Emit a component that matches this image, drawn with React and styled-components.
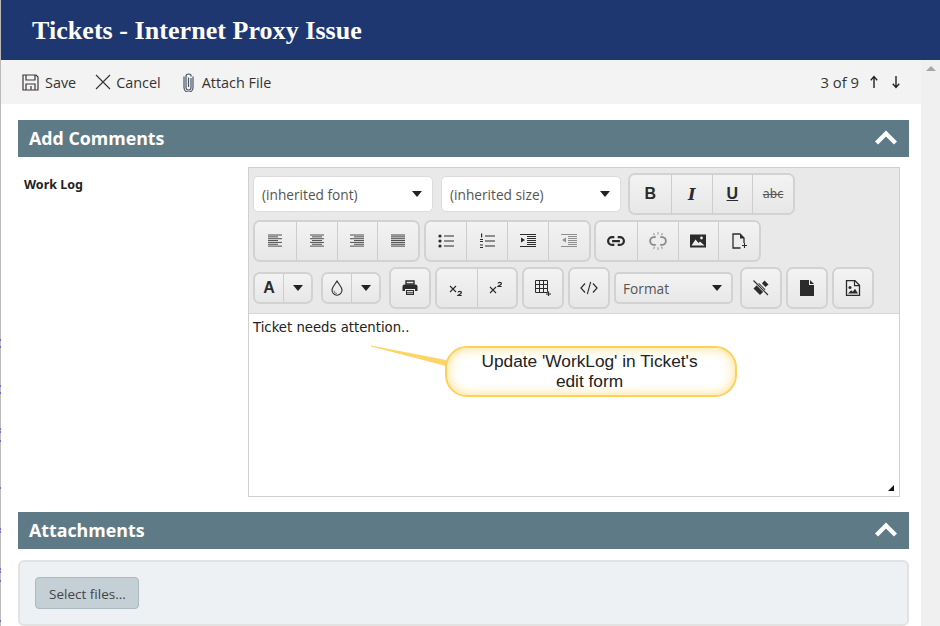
import React from "react";
import styled, { createGlobalStyle } from "styled-components";

const GlobalStyle = createGlobalStyle`
  html, body {
    margin: 0;
    padding: 0;
    background: #fff;
    overflow: hidden;
  }
`;

// bits of the page behind the window that show on the left edge
const edgeMarks = [339, 346, 385, 392, 428, 431, 440, 487, 528, 531, 568, 571, 580, 620];
const edgeStops = edgeMarks
  .map((y) => `#bbb ${y}px, #6f6fd8 ${y}px, #6f6fd8 ${y + 2}px, #bbb ${y + 2}px`)
  .join(", ");

const Page = styled.div`
  position: relative;
  width: 940px;
  height: 626px;
  overflow: hidden;
  display: flex;
  flex-direction: column;
  padding-left: 1px;
  box-sizing: border-box;
  font-family: "Open Sans", sans-serif;
`;

const EdgeStrip = styled.div`
  position: absolute;
  left: 0;
  top: 0;
  width: 1px;
  height: 626px;
  background: linear-gradient(#bbb 0, ${edgeStops}, #bbb 626px);
`;

const TitleBar = styled.header`
  flex: 0 0 60px;
  box-sizing: border-box;
  background: #1f3771;
  display: flex;
  align-items: center;
  padding: 2px 0 0 31px;
`;

const Title = styled.h1`
  margin: 0;
  color: #fff;
  font: bold 26px "Liberation Serif", serif;
  letter-spacing: 0.05px;
`;

const Body = styled.div`
  flex: 1;
  display: flex;
  min-height: 0;
`;

const Main = styled.main`
  flex: 1;
  min-width: 0;
`;

const Scrollbar = styled.div`
  flex: 0 0 19px;
  background: #f0f0f0;
  display: flex;
  justify-content: center;
  padding-top: 6px;
`;

const ScrollArrow = styled.div`
  width: 0;
  height: 0;
  border-left: 5px solid transparent;
  border-right: 5px solid transparent;
  border-bottom: 5px solid #a6a6a6;
`;

const ActionBar = styled.div`
  height: 44px;
  background: #f3f3f3;
  display: flex;
  align-items: center;
  padding: 0 18px 0 21px;
  color: #333;
  font-size: 14.4px;
`;

const Action = styled.span`
  display: flex;
  align-items: center;
  gap: ${(p) => p.$gap || 6}px;
  margin-right: ${(p) => p.$after || 20}px;
`;

const Pager = styled.div`
  margin-left: auto;
  display: flex;
  align-items: center;
  gap: 8px;
  font-size: 14.8px;
`;

const Content = styled.div`
  padding: 16px 12px 0 17px;
`;

const SectionBar = styled.div`
  height: 37px;
  box-sizing: border-box;
  background: #5f7a87;
  color: #fff;
  display: flex;
  align-items: center;
  justify-content: space-between;
  padding: 0 12px 2px 11px;
  font-size: 17.8px;
  font-weight: 700;
`;

const FormRow = styled.div`
  display: flex;
  padding: 10px 9px 15px 0;
`;

const FieldLabel = styled.label`
  flex: 0 0 230px;
  box-sizing: border-box;
  padding: 9px 0 0 6px;
  font: bold 12.5px "Noto Sans", sans-serif;
  color: #222;
`;

const Editor = styled.div`
  flex: 1;
  height: 330px;
  box-sizing: border-box;
  border: 1px solid #d0d0d0;
  display: flex;
  flex-direction: column;
`;

const EditorTools = styled.div`
  flex: 0 0 146px;
  box-sizing: border-box;
  background: #e9e9e9;
  border-bottom: 1px solid #d6d6d6;
  padding: 5px 4px 0;
  display: flex;
  flex-direction: column;
  gap: 5px;
`;

const ToolRow = styled.div`
  display: flex;
  align-items: center;
  height: 42px;
  gap: ${(p) => p.$gap || 4}px;
`;

const Dropdown = styled.div`
  width: ${(p) => p.$w}px;
  height: ${(p) => p.$h}px;
  box-sizing: border-box;
  margin-right: ${(p) => p.$after || 0}px;
  border: ${(p) => (p.$plain ? "2px solid #d2d2d2" : "1px solid #dcdcdc")};
  border-radius: 5px;
  background: ${(p) => (p.$plain ? "linear-gradient(#f3f3f3, #e8e8e8)" : "#fff")};
  display: flex;
  align-items: center;
  justify-content: space-between;
  padding: 0 ${(p) => (p.$plain ? 9 : 10)}px 0 ${(p) => (p.$plain ? 7 : 8)}px;
  font-size: 13.7px;
  color: #555;
`;

const Caret = styled.span`
  width: 0;
  height: 0;
  border-left: 5px solid transparent;
  border-right: 5px solid transparent;
  border-top: 6px solid #222;
`;

const ButtonGroup = styled.div`
  display: flex;
  height: ${(p) => p.$h || 42}px;
  box-sizing: border-box;
  margin-right: ${(p) => p.$after || 0}px;
  border: 2px solid #d2d2d2;
  border-radius: 7px;
  overflow: hidden;
`;

const ToolButton = styled.button`
  width: ${(p) => p.$w || 40.75}px;
  padding: 0;
  border: 0;
  border-left: 1px solid #cdcdcd;
  background: linear-gradient(#f3f3f3, #e7e7e7);
  display: flex;
  align-items: center;
  justify-content: center;
  color: #2b2b2b;

  &:first-child {
    border-left: 0;
  }
`;

const EditArea = styled.div`
  flex: 1;
  position: relative;
  padding: 6px 4px;
  font: 13.25px "DejaVu Sans", sans-serif;
  color: #222;
`;

const ResizeGrip = styled.span`
  position: absolute;
  right: 5px;
  bottom: 5px;
  width: 0;
  height: 0;
  border-left: 6px solid transparent;
  border-bottom: 6px solid #111;
`;

const CalloutTail = styled.svg`
  position: absolute;
  left: 122px;
  top: 31px;
`;

const Callout = styled.div`
  position: absolute;
  left: 196px;
  top: 32px;
  width: 292px;
  height: 51px;
  box-sizing: border-box;
  border: 2px solid #fdd05c;
  border-radius: 22px;
  background: #fff;
  box-shadow: inset 0 0 12px #ffdc7c;
  display: flex;
  align-items: center;
  justify-content: center;
  padding: 0 3px 2px 0;
  text-align: center;
  font: 17.3px/20px "Liberation Sans", sans-serif;
  color: #222;
`;

const DropZone = styled.div`
  margin-top: 11px;
  height: 66px;
  box-sizing: border-box;
  background: #eef1f4;
  border: 2px solid #e2e2e2;
  border-radius: 6px;
  padding: 15px;
`;

const SelectButton = styled.button`
  width: 104px;
  height: 32px;
  border: 1px solid #adb8bf;
  border-radius: 4px;
  background: #c4cfd6;
  color: #444;
  font: 13.5px/30px "Open Sans", sans-serif;
  padding: 1px 0 0 1px;
`;

const ToolLetter = styled.span`
  font: bold ${(p) => p.$size || 15}px "Liberation Sans", sans-serif;
  color: #2b2b2b;
  text-decoration: ${(p) => p.$deco || "none"};
`;

const ItalicLetter = styled.span`
  font: italic bold 16px "DejaVu Serif", serif;
  color: #2b2b2b;
`;

const StrikeLetter = styled.span`
  font: 11.5px "DejaVu Sans", sans-serif;
  color: #555;
  text-decoration: line-through;
`;

const Glyph = ({ children, size = 16, box = 16, fill = "#2b2b2b" }) => (
  <svg width={size} height={size} viewBox={`0 0 ${box} ${box}`} fill={fill}>
    {children}
  </svg>
);

// stripes for the align and list icons
const Stripes = ({ rows, opacity = 1 }) => (
  <Glyph>
    <g opacity={opacity}>
      {rows.map(([x, w], i) => (
        <rect key={i} x={x} y={1.5 + i * 1.85} width={w} height="1" />
      ))}
    </g>
  </Glyph>
);

const AlignLeft = () => <Stripes rows={[[1, 14], [1, 10], [1, 14], [1, 10], [1, 14], [1, 10], [1, 14]]} opacity={0.8} />;
const AlignCenter = () => <Stripes rows={[[1, 14], [3, 10], [1, 14], [3, 10], [1, 14], [3, 10], [1, 14]]} opacity={0.8} />;
const AlignRight = () => <Stripes rows={[[1, 14], [5, 10], [1, 14], [5, 10], [1, 14], [5, 10], [1, 14]]} opacity={0.8} />;
const AlignFull = () => <Stripes rows={[[1, 14], [1, 14], [1, 14], [1, 14], [1, 14], [1, 14], [1, 14]]} opacity={0.85} />;

const BulletList = () => (
  <Glyph>
    <circle cx="2" cy="3" r="1.6" />
    <circle cx="2" cy="8" r="1.6" />
    <circle cx="2" cy="13" r="1.6" />
    <rect x="6" y="2.5" width="10" height="1" />
    <rect x="6" y="7.5" width="10" height="1" />
    <rect x="6" y="12.5" width="10" height="1" />
  </Glyph>
);

const NumberList = () => (
  <Glyph>
    <rect x="2" y="0.5" width="1.2" height="4" />
    <rect x="1" y="6" width="3" height="1" />
    <rect x="1" y="8" width="3" height="1" />
    <rect x="1" y="11.5" width="3" height="1" />
    <rect x="1" y="14" width="3" height="1" />
    <rect x="6" y="2.5" width="10" height="1" />
    <rect x="6" y="7.5" width="10" height="1" />
    <rect x="6" y="12.5" width="10" height="1" />
  </Glyph>
);

const Indent = ({ out }) => (
  <Glyph fill={out ? "#8f8f8f" : "#2b2b2b"}>
    <rect x="0" y="1" width="16" height="1" />
    <rect x="7" y="3" width="9" height="1" />
    <rect x="7" y="5" width="9" height="1" />
    <rect x="7" y="7" width="9" height="1" />
    <rect x="7" y="9" width="9" height="1" />
    <rect x="7" y="11" width="9" height="1" />
    <rect x="0" y="13" width="16" height="1" />
    <path d={out ? "M5 4.5v5l-4-2.5z" : "M1 4.5v5l4-2.5z"} />
  </Glyph>
);

const LinkIcon = () => (
  <Glyph size={18}>
    <path
      d="M6.5 4.5h-2a3.5 3.5 0 0 0 0 7h2M9.5 4.5h2a3.5 3.5 0 0 1 0 7h-2M4.5 8h7"
      fill="none"
      stroke="#2b2b2b"
      strokeWidth="2"
    />
  </Glyph>
);

const UnlinkIcon = () => (
  <Glyph size={18}>
    <path
      d="M6 4.5H4.5a3.5 3.5 0 0 0 0 7H6M10 4.5h1.5a3.5 3.5 0 0 1 0 7H10"
      fill="none"
      stroke="#8a8a8a"
      strokeWidth="1.6"
    />
    <path d="M8 0v2.5M8 13.5V16M4 1l1 2M12 1l-1 2M4 15l1-2M12 15l-1-2" stroke="#a5a5a5" strokeWidth="1" />
  </Glyph>
);

const ImageIcon = () => (
  <Glyph>
    <path d="M0 1.5h16v13H0z" />
    <circle cx="11.5" cy="5" r="1.4" fill="#eee" />
    <path d="M1.5 12.5 5.5 6.5 8.5 10l1.5-1.5 4.5 4z" fill="#eee" />
  </Glyph>
);

const NewFileIcon = () => (
  <Glyph>
    <path d="M9.5 15H2V1h7l4 4v5" fill="none" stroke="#2b2b2b" strokeWidth="1.3" />
    <path d="M9 1v4.5h4" fill="#2b2b2b" />
    <path d="M11 12.5h5M13.5 10v5" stroke="#2b2b2b" strokeWidth="1.1" />
  </Glyph>
);

const DropIcon = () => (
  <Glyph>
    <path
      d="M8 1C6 4.5 3 7 3 10.2a5 5 0 0 0 10 0C13 7 10 4.5 8 1z"
      fill="none"
      stroke="#2b2b2b"
      strokeWidth="1.1"
    />
    <path d="M5 10.5a3 3 0 0 0 3 3" fill="none" stroke="#777" strokeWidth="1" />
  </Glyph>
);

const PrintIcon = () => (
  <Glyph>
    <path d="M4 1h8v3H4z" fill="none" stroke="#2b2b2b" strokeWidth="1.4" />
    <path d="M2.5 4.5h11A2 2 0 0 1 15.5 6.5V11H13V9H3v2H.5V6.5a2 2 0 0 1 2-2z" />
    <path d="M4 10h8v5H4z" />
    <path d="M5 11.5h6M5 13.2h6" stroke="#eee" strokeWidth="0.9" />
  </Glyph>
);

const SubScript = () => (
  <Glyph>
    <path d="M1 6l6 6M7 6l-6 6" stroke="#2b2b2b" strokeWidth="1.1" />
    <path d="M9 12.5c.3-1.6 3.6-1.6 3.4.2-.2 1-2.3 1.6-3.4 2.8h3.7" fill="none" stroke="#2b2b2b" strokeWidth="1.2" />
  </Glyph>
);

const SuperScript = () => (
  <Glyph>
    <path d="M1 7l6 6M7 7l-6 6" stroke="#2b2b2b" strokeWidth="1.1" />
    <path d="M9 3.5c.3-1.6 3.6-1.6 3.4.2-.2 1-2.3 1.6-3.4 2.8h3.7" fill="none" stroke="#2b2b2b" strokeWidth="1.2" />
  </Glyph>
);

const TableIcon = () => (
  <Glyph>
    <path d="M.5.5h12v12H.5zM.5 4.5h12M.5 8.5h12M4.5.5v12M8.5.5v12" fill="none" stroke="#2b2b2b" strokeWidth="1" />
    <path d="M11 14h5M13.5 11.5v4.5" stroke="#2b2b2b" strokeWidth="1.2" />
  </Glyph>
);

const CodeIcon = () => (
  <Glyph size={18}>
    <path d="M4.5 4 .8 8l3.7 4M11.5 4l3.7 4-3.7 4M9.5 2.5l-3 11" fill="none" stroke="#2b2b2b" strokeWidth="1" />
  </Glyph>
);

const CleanIcon = () => (
  <Glyph>
    <path d="M.5 8.5 6 3l6.5 6.5L7 15z" />
    <path d="M9 3.5 11.5.5l4 4-3 2.5z" />
    <path d="M.5 .5 15 15" stroke="#eee" strokeWidth="2.4" />
    <path d="M.5 .5 15 15" stroke="#2b2b2b" strokeWidth="1.1" />
  </Glyph>
);

const DocIcon = () => (
  <Glyph>
    <path d="M1 0h9v5h5v11H1z" />
    <path d="M11 0l4 4h-4z" />
  </Glyph>
);

const DocImageIcon = () => (
  <Glyph>
    <path d="M1.5.7h8.5l4.5 4.5v10.1h-13z" fill="none" stroke="#2b2b2b" strokeWidth="1.3" />
    <path d="M9.5.7v5h5" fill="none" stroke="#2b2b2b" strokeWidth="1.2" />
    <circle cx="5" cy="7.5" r="1.5" />
    <path d="M3 13.5l3.2-3.2 1.6 1.4 2.2-3 3 4.8z" />
  </Glyph>
);

const SaveIcon = () => (
  <svg width="17" height="17" viewBox="0 0 17 17" fill="none" stroke="#3a3a3a" strokeWidth="1.2">
    <path d="M1 1h13l2 2v13H1z" />
    <path d="M4 1v5h9V1M4 16v-6h9v6" />
    <path d="M9 12v4" stroke="#7a5c40" strokeWidth="1.6" />
  </svg>
);

const CloseIcon = () => (
  <svg width="16" height="16" viewBox="0 0 16 16" fill="none" stroke="#333" strokeWidth="1.1">
    <path d="M1 1l14 14M15 1 1 15" />
  </svg>
);

const ClipIcon = () => (
  <svg width="11" height="19" viewBox="0 0 11 19" fill="none" stroke="#4a5368" strokeWidth="1.2">
    <path d="M8 5v9.5a2.5 2.5 0 0 1-5 0V3.6a2.6 2.6 0 0 1 5.2 0" />
    <path d="M5.5 4.5v9.5M10 3.6v11a4.5 4.5 0 0 1-9 0V3.6" />
  </svg>
);

const ArrowIcon = ({ down }) => (
  <svg width="14" height="14" viewBox="0 0 14 14" fill="none" stroke="#222" strokeWidth="1.4">
    <g transform={down ? "rotate(180 7 7)" : undefined}>
      <path d="M7 13V2M3.8 5.2 7 1.6l3.2 3.6" />
    </g>
  </svg>
);

const Chevron = () => (
  <svg width="22" height="15" viewBox="0 0 22 15" fill="none" stroke="#fff" strokeWidth="4.4">
    <path d="M1.5 13 11 3.5l9.5 9.5" />
  </svg>
);

const Section = ({ title }) => (
  <SectionBar>
    {title}
    <Chevron />
  </SectionBar>
);

export default function App() {
  return (
    <>
      <GlobalStyle />
      <Page>
        <EdgeStrip />
        <TitleBar>
          <Title>Tickets - Internet Proxy Issue</Title>
        </TitleBar>
        <Body>
          <Main>
            <ActionBar>
              <Action $after={19}>
                <SaveIcon />
                Save
              </Action>
              <Action $gap={5} $after={22}>
                <CloseIcon />
                Cancel
              </Action>
              <Action $gap={8}>
                <ClipIcon />
                Attach File
              </Action>
              <Pager>
                3 of 9
                <ArrowIcon />
                <ArrowIcon down />
              </Pager>
            </ActionBar>
            <Content>
              <Section title="Add Comments" />
              <FormRow>
                <FieldLabel>Work Log</FieldLabel>
                <Editor>
                  <EditorTools>
                    <ToolRow>
                      <Dropdown $w={180} $h={36} $after={4}>
                        (inherited font)
                        <Caret />
                      </Dropdown>
                      <Dropdown $w={180} $h={36} $after={3}>
                        (inherited size)
                        <Caret />
                      </Dropdown>
                      <ButtonGroup>
                        <ToolButton><ToolLetter $size={16}>B</ToolLetter></ToolButton>
                        <ToolButton><ItalicLetter>I</ItalicLetter></ToolButton>
                        <ToolButton><ToolLetter $size={16} $deco="underline">U</ToolLetter></ToolButton>
                        <ToolButton><StrikeLetter>abc</StrikeLetter></ToolButton>
                      </ButtonGroup>
                    </ToolRow>
                    <ToolRow $gap={3.5}>
                      <ButtonGroup>
                        <ToolButton><AlignLeft /></ToolButton>
                        <ToolButton><AlignCenter /></ToolButton>
                        <ToolButton><AlignRight /></ToolButton>
                        <ToolButton><AlignFull /></ToolButton>
                      </ButtonGroup>
                      <ButtonGroup>
                        <ToolButton><BulletList /></ToolButton>
                        <ToolButton><NumberList /></ToolButton>
                        <ToolButton><Indent /></ToolButton>
                        <ToolButton><Indent out /></ToolButton>
                      </ButtonGroup>
                      <ButtonGroup>
                        <ToolButton><LinkIcon /></ToolButton>
                        <ToolButton><UnlinkIcon /></ToolButton>
                        <ToolButton><ImageIcon /></ToolButton>
                        <ToolButton><NewFileIcon /></ToolButton>
                      </ButtonGroup>
                    </ToolRow>
                    <ToolRow>
                      <ButtonGroup $h={32} $after={4}>
                        <ToolButton $w={28}><ToolLetter $size={16}>A</ToolLetter></ToolButton>
                        <ToolButton $w={28}><Caret /></ToolButton>
                      </ButtonGroup>
                      <ButtonGroup $h={32} $after={4}>
                        <ToolButton $w={28}><DropIcon /></ToolButton>
                        <ToolButton $w={28}><Caret /></ToolButton>
                      </ButtonGroup>
                      <ButtonGroup>
                        <ToolButton $w={38}><PrintIcon /></ToolButton>
                      </ButtonGroup>
                      <ButtonGroup>
                        <ToolButton $w={39.5}><SubScript /></ToolButton>
                        <ToolButton $w={39.5}><SuperScript /></ToolButton>
                      </ButtonGroup>
                      <ButtonGroup>
                        <ToolButton $w={38}><TableIcon /></ToolButton>
                      </ButtonGroup>
                      <ButtonGroup>
                        <ToolButton $w={38}><CodeIcon /></ToolButton>
                      </ButtonGroup>
                      <Dropdown $w={119} $h={32} $after={3} $plain>
                        Format
                        <Caret />
                      </Dropdown>
                      <ButtonGroup>
                        <ToolButton $w={38}><CleanIcon /></ToolButton>
                      </ButtonGroup>
                      <ButtonGroup>
                        <ToolButton $w={38}><DocIcon /></ToolButton>
                      </ButtonGroup>
                      <ButtonGroup>
                        <ToolButton $w={38}><DocImageIcon /></ToolButton>
                      </ButtonGroup>
                    </ToolRow>
                  </EditorTools>
                  <EditArea>
                    Ticket needs attention..
                    <CalloutTail width="76" height="22" viewBox="0 0 76 22">
                      <path d="M0 .5 75 15v6L0 1.5z" fill="#fdd466" />
                    </CalloutTail>
                    <Callout>
                      Update 'WorkLog' in Ticket's
                      <br />
                      edit form
                    </Callout>
                    <ResizeGrip />
                  </EditArea>
                </Editor>
              </FormRow>
              <Section title="Attachments" />
              <DropZone>
                <SelectButton>Select files...</SelectButton>
              </DropZone>
            </Content>
          </Main>
          <Scrollbar>
            <ScrollArrow />
          </Scrollbar>
        </Body>
      </Page>
    </>
  );
}
